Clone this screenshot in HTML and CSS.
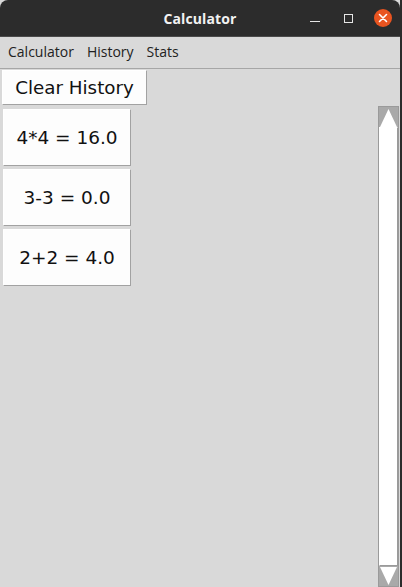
FILE: index.html
```html
<!DOCTYPE html>
<html>
<head>
<meta charset="utf-8">
<link rel="stylesheet" href="styles.css">
</head>
<body>
<div class="window">
  <div class="titlebar">
    <span class="title">Calculator</span>
    <div class="controls">
      <span class="ctl-min"></span>
      <span class="ctl-max"></span>
      <span class="ctl-close">
        <svg width="18" height="18" viewBox="0 0 18 18"><path d="M5.5 5.5 L12.5 12.5 M12.5 5.5 L5.5 12.5" stroke="#fff" stroke-width="1.6" stroke-linecap="round"/></svg>
      </span>
    </div>
  </div>
  <div class="menubar">
    <span class="menu-item">Calculator</span>
    <span class="menu-item">History</span>
    <span class="menu-item">Stats</span>
  </div>
  <div class="content">
    <div class="column">
      <div class="clear-btn">Clear History</div>
      <div class="cards">
        <div class="card">4*4 = 16.0</div>
        <div class="card">3-3 = 0.0</div>
        <div class="card">2+2 = 4.0</div>
      </div>
    </div>
    <div class="scrollbar">
      <div class="arrow arrow-up"><svg width="19" height="19" viewBox="0 0 19 19"><polygon points="9.5,1 18,19 1,19" fill="#fff"/></svg></div>
      <div class="slider"></div>
      <div class="arrow arrow-down"><svg width="19" height="19" viewBox="0 0 19 19"><polygon points="1,0 18,0 9.5,18" fill="#fff"/></svg></div>
    </div>
  </div>
</div>
</body>
</html>
```
FILE: styles.css
```css
* { box-sizing: border-box; }
html, body { margin: 0; padding: 0; }
body { width: 402px; height: 587px; overflow: hidden; background: #2b2b2b; }
.window {
  width: 402px; height: 587px;
  display: flex; flex-direction: column;
  border-right: 2px solid #2b2b2b;
  background: #d9d9d9;
}
.titlebar {
  height: 37px; flex: none;
  background: #2c2c2c;
  border-radius: 8px 8px 0 0;
  position: relative;
  display: flex; align-items: center; justify-content: center;
  border-bottom: 1px solid #4a4a4a;
}
.title {
  color: #f2f2f2; font-family: "Open Sans", "DejaVu Sans", sans-serif;
  font-weight: 700; font-size: 14px; letter-spacing: 0.1px;
}
.controls {
  position: absolute; right: 8px; top: 0; height: 36px;
  display: flex; align-items: center;
}
.ctl-min { width: 10px; height: 1px; background: #e6e6e6; margin-top: 7px; margin-right: 24px; }
.ctl-max { width: 9px; height: 9px; border: 1px solid #e6e6e6; margin-right: 21px; }
.ctl-close {
  width: 18px; height: 18px; border-radius: 50%; background: #e95420;
  display: flex; align-items: center; justify-content: center;
}
.menubar {
  height: 32px; flex: none;
  background: #d9d9d9;
  border-bottom: 1px solid #a6a6a6;
  display: flex; align-items: center; padding-left: 8px; gap: 13px; padding-bottom: 2px;
  font-family: "Open Sans", "DejaVu Sans", sans-serif; font-size: 14px; color: #222;
}
.content { flex: 1; display: flex; justify-content: space-between; min-height: 0; }
.column { padding: 1px 0 0 2px; }
.clear-btn {
  width: 145px; height: 35px;
  background: #fdfdfd;
  border: 1px solid #fff; border-right-color: #a2a2a2; border-bottom-color: #a2a2a2;
  font-family: "DejaVu Sans", sans-serif; font-size: 18.3px; color: #111;
  display: flex; align-items: center; justify-content: center;
}
.cards { display: flex; flex-direction: column; gap: 3px; margin-top: 4px; padding-left: 1px; }
.card {
  width: 128px; height: 57px;
  background: #fdfdfd;
  border: 1px solid #fff; border-right-color: #a2a2a2; border-bottom-color: #a2a2a2;
  font-family: "DejaVu Sans", sans-serif; font-size: 18.5px; color: #111;
  display: flex; align-items: center; justify-content: center;
}
.scrollbar {
  width: 21px; margin-top: 37px; margin-right: 1px;
  display: flex; flex-direction: column;
  border: 1px solid #9a9a9a; background: #a9a9a9;
}
.arrow { height: 20px; flex: none; display: flex; align-items: center; justify-content: center; background: #a9a9a9; }
.slider { flex: 1; background: #fff; border-left: 1px solid #fff; border-right: 1px solid #9a9a9a; border-top: 1px solid #fff; border-bottom: 1px solid #9a9a9a; }
```
